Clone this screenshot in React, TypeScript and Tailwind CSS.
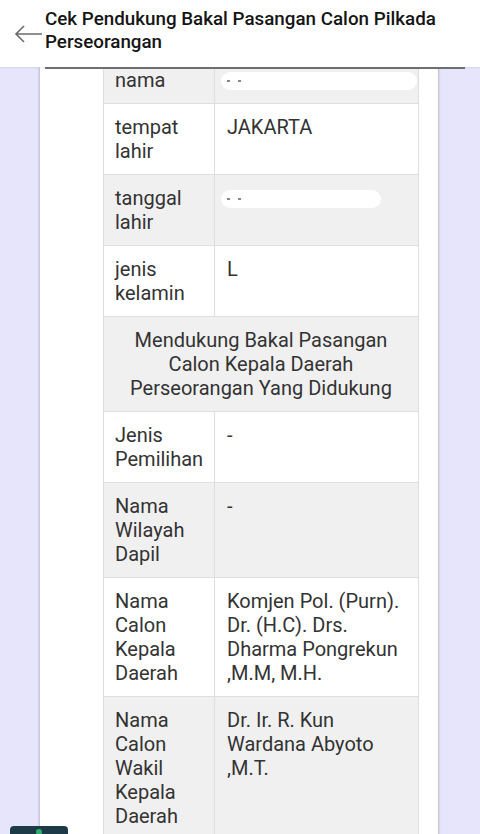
import React from 'react';

type Row = { label: string[]; value?: string[]; blob?: boolean };

const ROWS: Row[] = [
  { label: ['tempat', 'lahir'], value: ['JAKARTA'] },
  { label: ['tanggal', 'lahir'], blob: true },
  { label: ['jenis', 'kelamin'], value: ['L'] },
];

const ROWS2: Row[] = [
  { label: ['Jenis', 'Pemilihan'], value: ['-'] },
  { label: ['Nama', 'Wilayah', 'Dapil'], value: ['-'] },
  {
    label: ['Nama', 'Calon', 'Kepala', 'Daerah'],
    value: ['Komjen Pol. (Purn).', 'Dr. (H.C). Drs.', 'Dharma Pongrekun', ',M.M, M.H.'],
  },
  {
    label: ['Nama', 'Calon', 'Wakil', 'Kepala', 'Daerah'],
    value: ['Dr. Ir. R. Kun', 'Wardana Abyoto', ',M.T.'],
  },
];

function Lines({ items }: { items: string[] }) {
  return (
    <>
      {items.map((t, i) => (
        <div key={i}>{t}</div>
      ))}
    </>
  );
}

// white smear that hides the personal data
function Redacted({ width }: { width: string }) {
  return (
    <div className={`flex h-[18px] ${width} items-center gap-[8px] rounded-full bg-white pl-[6px]`}>
      <span className="h-[2px] w-[3px] bg-[#888]" />
      <span className="h-[2px] w-[3px] bg-[#888]" />
    </div>
  );
}

function TableRow({ row, gray }: { row: Row; gray: boolean }) {
  return (
    <div className={`flex border-t border-[#dedede] ${gray ? 'bg-[#f0f0f0]' : 'bg-white'}`}>
      <div className="w-[111px] shrink-0 border-r border-[#dedede] px-[11px] py-[11px]">
        <Lines items={row.label} />
      </div>
      <div className="flex-1 px-[12px] py-[11px]">
        {row.value && <Lines items={row.value} />}
        {row.blob && (
          <div className="pt-[4px] -ml-[6px]">
            <Redacted width="w-[160px]" />
          </div>
        )}
      </div>
    </div>
  );
}

export default function App() {
  return (
    <div
      className="relative flex h-[834px] w-[480px] flex-col overflow-hidden bg-[#e6e5fb] text-[20px] leading-[24px] text-[#333]"
      style={{ fontFamily: 'Roboto, "Noto Sans", sans-serif' }}
    >
      {/* top bar */}
      <div className="relative z-10 flex h-[67px] shrink-0 items-start bg-white shadow-[0_1px_2px_rgba(0,0,0,0.08)]">
        <svg width="30" height="20" viewBox="0 0 30 20" className="ml-[13px] mt-[24px] shrink-0">
          <path d="M29 10H3M11 2L3 10l8 8" fill="none" stroke="#6b6b6b" strokeWidth="1.6" />
        </svg>
        <div className="ml-[2px] pt-[8px] text-[18.8px] font-medium leading-[23px] text-[#151515]">
          Cek Pendukung Bakal Pasangan Calon Pilkada
          <br />
          Perseorangan
        </div>
      </div>
      <div className="relative z-10 -mb-[1.5px] ml-[45px] mr-[15px] h-[1.5px] shrink-0 bg-[#6f6f6f]" />

      {/* content */}
      <div className="flex flex-1">
        <div className="ml-[40px] w-[398px] bg-white shadow-[0_0_3px_rgba(0,0,0,0.35)]">
          <div className="ml-[63px] w-[316px] -mt-[10px] border-x border-b border-[#dedede]">
            <div className="flex bg-[#f0f0f0]">
              <div className="w-[111px] shrink-0 border-r border-[#dedede] px-[11px] py-[11px]">nama</div>
              <div className="flex flex-1 items-start pl-[6px] pt-[15px]">
                <Redacted width="w-[196px]" />
              </div>
            </div>
            {ROWS.map((r, i) => (
              <TableRow key={i} row={r} gray={i % 2 === 1} />
            ))}
            <div className="border-t border-[#dedede] bg-[#f0f0f0] px-[8px] py-[11px] text-center">
              Mendukung Bakal Pasangan
              <br />
              Calon Kepala Daerah
              <br />
              Perseorangan Yang Didukung
            </div>
            {ROWS2.map((r, i) => (
              <TableRow key={i} row={r} gray={i % 2 === 1} />
            ))}
          </div>
        </div>
      </div>

      {/* floating button peeking at the bottom */}
      <div className="absolute bottom-[-20px] left-[10px] flex h-[28px] w-[58px] justify-center rounded-[4px] bg-[#1c3a48] pt-[3px]">
        <div className="h-[6px] w-[6px] rounded-full bg-[#2fae6b]" />
      </div>
    </div>
  );
}
